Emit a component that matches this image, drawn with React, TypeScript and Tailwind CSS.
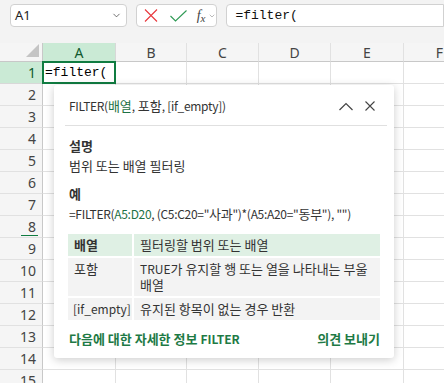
import { ChevronDown } from "lucide-react";

const cols = [
  { name: "A", cls: "w-[73px]" },
  { name: "B", cls: "w-[71px]" },
  { name: "C", cls: "w-[72px]" },
  { name: "D", cls: "w-[72px]" },
  { name: "E", cls: "w-[73px]" },
  { name: "F", cls: "w-[72px]" },
];

const rows = Array.from({ length: 15 }, (_, i) => i + 1);

const ui = { fontFamily: '"Noto Sans", "Noto Sans CJK KR", sans-serif' };
const kr = { fontFamily: '"Noto Sans CJK KR", "Noto Sans", sans-serif' };
const mono = { fontFamily: '"Liberation Mono", "DejaVu Sans Mono", monospace' };

function Toolbar() {
  return (
    <div className="h-[43px] bg-[#f3f3f3] flex items-start pt-[4px] pl-[10px] gap-[9px]">
      {/* name box */}
      <div className="w-[123px] h-[23px] bg-white border border-[#d1d1d1] rounded-[4px] flex items-center justify-between pl-[4px] pr-[4px]">
        <span className="text-[13px] text-[#222]" style={ui}>
          A1
        </span>
        <ChevronDown className="w-[11px] h-[11px] text-[#333]" strokeWidth={1.5} />
      </div>
      {/* cancel / enter / fx */}
      <div className="w-[86px] h-[23px] bg-white border border-[#d1d1d1] rounded-[4px] flex items-center pl-[6px] gap-[10px]">
        <svg width="14" height="13" viewBox="0 0 14 13" className="ml-[1px]">
          <path d="M1 0.5 L13 12.5 M13 0.5 L1 12.5" stroke="#e8383d" strokeWidth="1.1" fill="none" />
        </svg>
        <svg width="17" height="12" viewBox="0 0 17 12" className="ml-[2px]">
          <path d="M0.5 6 L5.5 11 L16.5 0.5" stroke="#2f9a55" strokeWidth="1.1" fill="none" />
        </svg>
        <div className="flex items-center gap-[3px]">
          <span className="text-[14px] text-[#444] italic leading-none" style={{ fontFamily: '"Liberation Serif", serif' }}>
            f<sub className="text-[11px]">x</sub>
          </span>
          <ChevronDown className="w-[8px] h-[8px] text-[#999]" strokeWidth={2} />
        </div>
      </div>
      {/* formula bar */}
      <div className="w-[230px] h-[23px] bg-white border border-[#d1d1d1] rounded-l-[4px] flex items-center pl-[8px]">
        <span className="text-[13px] text-[#111]" style={mono}>
          =filter(
        </span>
      </div>
    </div>
  );
}

function Grid() {
  return (
    <div className="flex flex-col" style={ui}>
      {/* header row */}
      <div className="flex h-[19px] bg-[#f5f5f5]">
        <div className="w-[43px] shrink-0 border-r border-b border-[#c8c8c8] relative">
          <svg width="13" height="13" viewBox="0 0 13 13" className="absolute right-[3px] bottom-[4px]">
            <path d="M13 0 L13 13 L0 13 Z" fill="#c4c4c4" />
          </svg>
        </div>
        {cols.map((c) => (
          <div
            key={c.name}
            className={`${c.cls} shrink-0 flex items-center justify-center text-[14px] border-b border-r ${
              c.name === "A"
                ? "bg-[#caead5] text-[#0f5a2e] border-b-[#c8c8c8] border-r-[#d8d8d8]"
                : "text-[#444] border-b-[#c8c8c8] border-r-[#e1e1e1]"
            }`}
          >
            {c.name}
          </div>
        ))}
      </div>
      {rows.map((r) => (
        <div key={r} className="flex h-[22px]">
          <div
            className={`w-[43px] shrink-0 relative flex items-center justify-end pr-[6px] text-[14px] border-r border-b border-r-[#c8c8c8] ${
              r === 1 ? "bg-[#caead5] text-[#0f5a2e] border-b-[#d8d8d8]" : "bg-[#f5f5f5] text-[#444] border-b-[#e1e1e1]"
            }`}
          >
            {r}
            {r === 8 && <span className="absolute left-[21px] right-[4px] bottom-[1px] h-[1px] bg-[#107c41]" />}
          </div>
          {cols.map((c) => (
            <div key={c.name} className={`${c.cls} shrink-0 relative border-r border-b border-[#e1e1e1]`}>
              {r === 1 && c.name === "A" && (
                <>
                  <span className="absolute left-[2px] top-[2px] text-[13px] text-black leading-[18px]" style={mono}>
                    =filter(
                  </span>
                  <span className="absolute -left-[1px] -top-[1px] -right-[1px] -bottom-[1px] border-2 border-[#107c41]" />
                </>
              )}
            </div>
          ))}
        </div>
      ))}
    </div>
  );
}

function Popup() {
  return (
    <div
      className="absolute left-[54px] top-[85px] w-[340px] h-[273px] bg-white rounded-[3px] shadow-[0_2px_10px_rgba(0,0,0,0.2)] flex flex-col text-[13px] text-[#333]"
      style={kr}
    >
      <div className="h-[40px] flex items-center pl-[15px] pr-[19px] pt-[2px]">
        <div className="flex-1">
          <span className="text-[12px] tracking-[-0.3px]">FILTER(</span>
          <span className="text-[#1e7145]">배열</span>
          <span className="text-[12px]">, </span>포함
          <span className="text-[12px] tracking-[-0.3px]">, [if_empty])</span>
        </div>
        <svg width="14" height="9" viewBox="0 0 14 9" className="mr-[12px]">
          <path d="M0.5 8 L7 1.5 L13.5 8" stroke="#444" strokeWidth="1.2" fill="none" />
        </svg>
        <svg width="10" height="10" viewBox="0 0 10 10">
          <path d="M0.5 0.5 L9.5 9.5 M9.5 0.5 L0.5 9.5" stroke="#444" strokeWidth="1.1" fill="none" />
        </svg>
      </div>
      <div className="ml-[11px] mr-[7px] h-px bg-[#e0e0e0]" />
      <div className="flex flex-col px-[14px] pt-[10px]">
        <div className="pl-[1px] font-bold leading-[20px]">설명</div>
        <div className="pl-[1px] leading-[20px]">범위 또는 배열 필터링</div>
        <div className="pl-[1px] font-bold leading-[20px] mt-[8px]">예</div>
        <div className="pl-[1px] leading-[20px] text-[12px] tracking-[-0.3px]">
          =FILTER(<span className="text-[#1e7145]">A5:D20</span>, (C5:C20="<span className="text-[13px]">사과</span>")*(A5:A20="
          <span className="text-[13px]">동부</span>"), "")
        </div>
        <div className="grid grid-cols-[64px_1fr] gap-[2px] mt-[10px] leading-[16px]">
          <div className="bg-[#dff0e4] px-[6px] py-[3px] font-bold">배열</div>
          <div className="bg-[#dff0e4] px-[6px] py-[3px]">필터링할 범위 또는 배열</div>
          <div className="bg-[#f3f3f3] px-[6px] py-[3px]">포함</div>
          <div className="bg-[#f3f3f3] px-[6px] py-[3px]">
            <span className="text-[12px]">TRUE</span>가 유지할 행 또는 열을 나타내는 부울
            <br />
            배열
          </div>
          <div className="bg-[#f3f3f3] pl-[5px] py-[3px] text-[12px] whitespace-nowrap">[if_empty]</div>
          <div className="bg-[#f3f3f3] px-[6px] py-[3px]">유지된 항목이 없는 경우 반환</div>
        </div>
        <div className="flex justify-between mt-[9px] pl-[1px] font-bold text-[#1e7a45] leading-[20px]">
          <span>
            다음에 대한 자세한 정보 <span className="text-[12px]">FILTER</span>
          </span>
          <span>의견 보내기</span>
        </div>
      </div>
    </div>
  );
}

export default function App() {
  return (
    <div className="w-[444px] h-[383px] overflow-hidden relative bg-white">
      <Toolbar />
      <Grid />
      <Popup />
    </div>
  );
}
